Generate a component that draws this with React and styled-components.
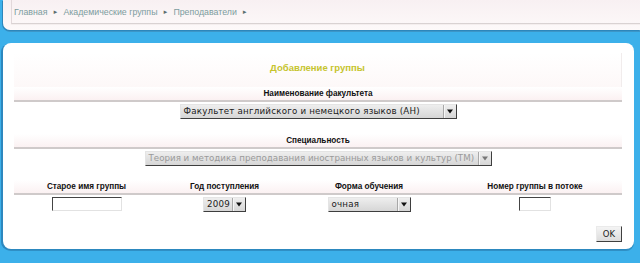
import React from "react";
import styled, { createGlobalStyle } from "styled-components";

const GlobalStyle = createGlobalStyle`
  html, body {
    margin: 0;
    padding: 0;
    background: #3cb0ea;
    width: 640px;
    height: 263px;
    overflow: hidden;
  }
  body {
    font-family: "Liberation Sans", Arial, sans-serif;
  }
`;

const Page = styled.div`
  display: flex;
  flex-direction: column;
  height: 263px;
`;

const TopBar = styled.div`
  height: 30px;
  margin-left: 3px;
  background: linear-gradient(#f8f0f2, #fdf9f9);
  border-bottom-left-radius: 7px;
  box-shadow: -1px 1px 0 #2d86bb, 0 2px 0 #3c96c8;
  padding: 0 0 0 8px;
  box-sizing: border-box;
`;

const Crumbs = styled.div`
  height: 23px;
  display: flex;
  align-items: center;
  gap: 3px;
  padding-left: 2px;
  border-left: 1px solid #e2d8da;
  border-bottom: 1px solid #d9d2d2;
  box-shadow: 0 1px 0 #f4eeee;
  font-size: 8.8px;
  color: #7c9c9e;
`;

const Arrow = styled.span`
  font-size: 6px;
  color: #5a6e6e;
  margin: 1px 2px 0;
`;

const Panel = styled.div`
  margin: 13px 6px 0 3px;
  height: 206px;
  background: #fff;
  border-radius: 8px;
  box-shadow: -2px 1px 0 #2c88bf, 0 2px 0 #2f8fc5;
  padding: 10px 12px 0 11px;
  box-sizing: border-box;
  display: flex;
  flex-direction: column;
`;

const TitleRow = styled.div`
  height: 34px;
  padding-bottom: 6px;
  box-sizing: border-box;
  display: flex;
  align-items: center;
  justify-content: center;
  background: linear-gradient(#ffffff, #fdf8f8);
  border-right: 1px solid #f1ecec;
  font-size: 9.5px;
  font-weight: bold;
  color: #c6c42e;
`;

const LabelRow = styled.div`
  height: 13px;
  margin-top: ${(p) => p.$top || 0}px;
  display: ${(p) => (p.$grid ? "grid" : "flex")};
  grid-template-columns: 145px 131px 158px 174px;
  justify-content: center;
  align-items: center;
  background: linear-gradient(#ffffff, #fbf1f2);
  border-bottom: 2px solid #cfcaca;
  font-size: 8.2px;
  font-weight: bold;
  color: #111;
  text-align: center;
`;

const FieldRow = styled.div`
  margin-top: 2px;
  display: ${(p) => (p.$grid ? "grid" : "flex")};
  grid-template-columns: 145px 131px 158px 174px;
  justify-content: center;
  justify-items: center;
`;

const SelectBox = styled.div`
  width: ${(p) => p.$w}px;
  height: 15px;
  box-sizing: border-box;
  display: flex;
  align-items: stretch;
  background: linear-gradient(#eeeeee, #d6d6d6);
  border: 1px solid;
  border-color: #e4e4e4 #3e3e3e #3e3e3e #e4e4e4;
  font-family: "DejaVu Sans", sans-serif;
  font-size: 8.7px;
  letter-spacing: ${(p) => (p.$disabled ? 0 : 0.2)}px;
  color: ${(p) => (p.$disabled ? "#9a9a9a" : "#1a1a1a")};
`;

const SelectText = styled.span`
  flex: 1;
  padding-left: 3px;
  line-height: 13px;
  white-space: nowrap;
  overflow: hidden;
`;

const SelectBtn = styled.span`
  width: 12px;
  display: flex;
  align-items: center;
  justify-content: center;
  border-left: 1px solid #a8a8a8;
  box-shadow: inset 1px 0 0 #f6f6f6;
`;

const TextInput = styled.div`
  width: ${(p) => p.$w}px;
  height: 14px;
  box-sizing: border-box;
  background: #fff;
  border: 1px solid;
  border-color: #444 #e2e2e2 #e2e2e2 #444;
`;

const Footer = styled.div`
  margin-top: 14px;
  display: flex;
  justify-content: flex-end;
`;

const OkButton = styled.button`
  width: 26px;
  height: 16px;
  padding: 0;
  box-sizing: border-box;
  background: linear-gradient(#f4f4f4, #dcdcdc);
  border: 1px solid;
  border-color: #eaeaea #3f3f3f #3f3f3f #eaeaea;
  font-family: "DejaVu Sans", sans-serif;
  font-size: 8.5px;
  color: #222;
`;

function Tri({ color }) {
  return (
    <svg width="6" height="5" viewBox="0 0 6 5">
      <path d="M0 0.5h6L3 4.5z" fill={color} />
    </svg>
  );
}

function Select({ w, value, disabled }) {
  return (
    <SelectBox $w={w} $disabled={disabled}>
      <SelectText>{value}</SelectText>
      <SelectBtn>
        <Tri color={disabled ? "#777" : "#111"} />
      </SelectBtn>
    </SelectBox>
  );
}

export default function App() {
  return (
    <Page>
      <GlobalStyle />
      <TopBar>
        <Crumbs>
          <span>Главная</span>
          <Arrow>►</Arrow>
          <span>Академические группы</span>
          <Arrow>►</Arrow>
          <span>Преподаватели</span>
          <Arrow>►</Arrow>
        </Crumbs>
      </TopBar>
      <Panel>
        <TitleRow>Добавление группы</TitleRow>
        <LabelRow>Наименование факультета</LabelRow>
        <FieldRow>
          <Select w={277} value="Факультет английского и немецкого языков (АН)" />
        </FieldRow>
        <LabelRow $top={15}>Специальность</LabelRow>
        <FieldRow>
          <Select
            w={347}
            disabled
            value="Теория и методика преподавания иностранных языков и культур (ТМ)"
          />
        </FieldRow>
        <LabelRow $top={14} $grid>
          <span>Старое имя группы</span>
          <span>Год поступления</span>
          <span>Форма обучения</span>
          <span>Номер группы в потоке</span>
        </LabelRow>
        <FieldRow $grid>
          <TextInput $w={70} />
          <Select w={43} value="2009" />
          <Select w={83} value="очная" />
          <TextInput $w={32} />
        </FieldRow>
        <Footer>
          <OkButton>OK</OkButton>
        </Footer>
      </Panel>
    </Page>
  );
}
